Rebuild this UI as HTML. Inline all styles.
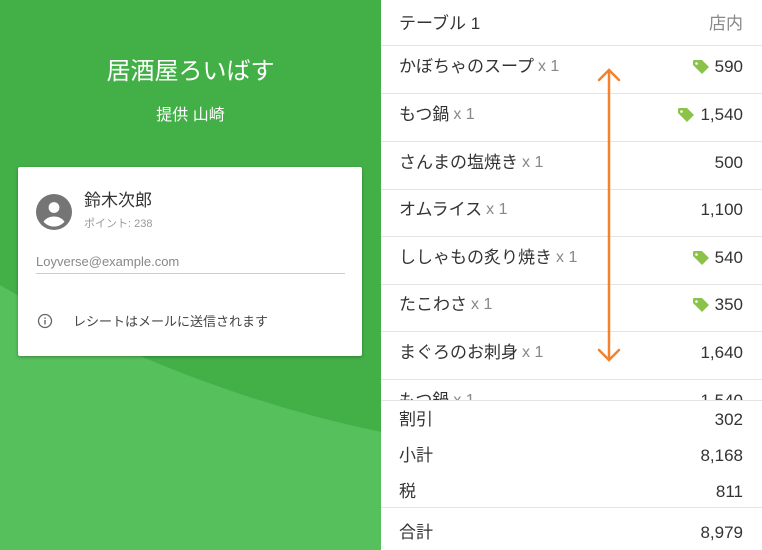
<!DOCTYPE html>
<html><head><meta charset="utf-8"><style>
*{margin:0;padding:0;box-sizing:border-box}
body{width:762px;height:550px;overflow:hidden;font-family:"Liberation Sans","Noto Sans CJK JP",sans-serif;position:relative;background:#fff;line-height:20px}
#left{position:absolute;left:0;top:0;width:381px;height:550px;background:#43b047;overflow:hidden}
.t1{position:absolute;top:59px;width:381px;text-align:center;color:#fff;font-size:24px;line-height:26px}
.t2{position:absolute;top:106px;width:381px;text-align:center;color:#fff;font-size:16px}
#card{position:absolute;left:18px;top:167px;width:344px;height:189px;background:#fff;border-radius:2px;box-shadow:0 1px 3px rgba(0,0,0,.3)}
#right{position:absolute;left:381px;top:0;width:381px;height:550px}
.row{position:absolute;left:0;width:381px;height:48px;border-bottom:1px solid #e4e4e4;font-size:17px;color:#333}
.row .n{position:absolute;left:18px;top:11px;height:20px;display:flex;align-items:center}
.row .n span{color:#888;font-size:16px;margin-left:4px}
.row .p{position:absolute;right:19px;top:11px;height:20px;display:flex;align-items:center}
.tag{margin-right:6px}
.f{position:absolute;left:0;width:381px;font-size:17px;color:#333;height:20px}
.f .n{position:absolute;left:18px;top:0;height:20px;display:flex;align-items:center}.f .p{position:absolute;right:19px;top:0;height:20px;display:flex;align-items:center}
</style></head><body>
<div id="left">
<svg width="381" height="550" style="position:absolute;left:0;top:0"><path d="M0 285 Q180 390 381 432 L381 550 L0 550Z" fill="#56c05c"/></svg>
<div class="t1">居酒屋ろいばす</div>
<div class="t2">提供 山崎</div>
<div id="card">
<svg width="36" height="36" style="position:absolute;left:18px;top:27px" viewBox="0 0 24 24"><circle cx="12" cy="12" r="12" fill="#757575"/><circle cx="12" cy="9" r="3.6" fill="#fff"/><path d="M5 18.5c1.5-2.5 4.5-3.5 7-3.5s5.5 1 7 3.5c-1.8 2-4.3 3.2-7 3.2s-5.2-1.2-7-3.2z" fill="#fff"/></svg>
<div style="position:absolute;left:66px;top:24px;font-size:17px;color:#333">鈴木次郎</div>
<div style="position:absolute;left:66px;top:47px;font-size:11px;color:#999">ポイント: 238</div>
<div style="position:absolute;left:18px;top:85px;font-size:13px;color:#888">Loyverse@example.com</div>
<div style="position:absolute;left:18px;top:106px;width:309px;height:1px;background:#ccc"></div>
<svg width="16" height="16" style="position:absolute;left:19px;top:146px" viewBox="0 0 16 16"><circle cx="8" cy="8" r="6.5" fill="none" stroke="#666" stroke-width="1.3"/><rect x="7.3" y="7" width="1.4" height="4.5" fill="#666"/><rect x="7.3" y="4.5" width="1.4" height="1.4" fill="#666"/></svg>
<div style="position:absolute;left:55px;top:145px;font-size:13px;color:#444">レシートはメールに送信されます</div>
</div>
</div>
<div id="right">
<div class="row" style="top:0;height:46px"><div class="n" style="top:14px">テーブル 1</div><div class="p" style="color:#888;top:14px">店内</div></div>
<div class="row" style="top:46px"><div class="n">かぼちゃのスープ <span>x 1</span></div><div class="p"><svg class="tag" width="16" height="14" viewBox="0 0 16 14"><path d="M0 1.5Q0 0 1.5 0H9L16 7 9 14 0 5Z" fill="#8bc34a"/><circle cx="3.5" cy="3.5" r="1.3" fill="#fff"/></svg>590</div></div>
<div class="row" style="top:94px"><div class="n">もつ鍋 <span>x 1</span></div><div class="p"><svg class="tag" width="16" height="14" viewBox="0 0 16 14"><path d="M0 1.5Q0 0 1.5 0H9L16 7 9 14 0 5Z" fill="#8bc34a"/><circle cx="3.5" cy="3.5" r="1.3" fill="#fff"/></svg>1,540</div></div>
<div class="row" style="top:142px"><div class="n">さんまの塩焼き <span>x 1</span></div><div class="p">500</div></div>
<div class="row" style="top:189px"><div class="n">オムライス <span>x 1</span></div><div class="p">1,100</div></div>
<div class="row" style="top:237px"><div class="n">ししゃもの炙り焼き <span>x 1</span></div><div class="p"><svg class="tag" width="16" height="14" viewBox="0 0 16 14"><path d="M0 1.5Q0 0 1.5 0H9L16 7 9 14 0 5Z" fill="#8bc34a"/><circle cx="3.5" cy="3.5" r="1.3" fill="#fff"/></svg>540</div></div>
<div class="row" style="top:284px"><div class="n">たこわさ <span>x 1</span></div><div class="p"><svg class="tag" width="16" height="14" viewBox="0 0 16 14"><path d="M0 1.5Q0 0 1.5 0H9L16 7 9 14 0 5Z" fill="#8bc34a"/><circle cx="3.5" cy="3.5" r="1.3" fill="#fff"/></svg>350</div></div>
<div class="row" style="top:332px"><div class="n">まぐろのお刺身 <span>x 1</span></div><div class="p">1,640</div></div>
<div class="row" style="top:380px"><div class="n">もつ鍋 <span>x 1</span></div><div class="p">1,540</div></div>
<div style="position:absolute;left:0;top:400px;width:381px;height:150px;background:#fff;border-top:1px solid #e4e4e4"></div>
<div class="f" style="top:410px"><div class="n">割引</div><div class="p">302</div></div>
<div class="f" style="top:446px"><div class="n">小計</div><div class="p">8,168</div></div>
<div class="f" style="top:482px"><div class="n">税</div><div class="p">811</div></div>
<div style="position:absolute;left:0;top:507px;width:381px;height:1px;background:#e4e4e4"></div>
<div class="f" style="top:523px"><div class="n">合計</div><div class="p">8,979</div></div>
<svg width="30" height="300" style="position:absolute;left:213px;top:66px"><g stroke="#f4812f" stroke-width="2.5" fill="none" stroke-linecap="round"><path d="M15 4V294"/><path d="M5 14L15 4 25 14"/><path d="M5 284L15 294 25 284"/></g></svg>
</div>
</body></html>
